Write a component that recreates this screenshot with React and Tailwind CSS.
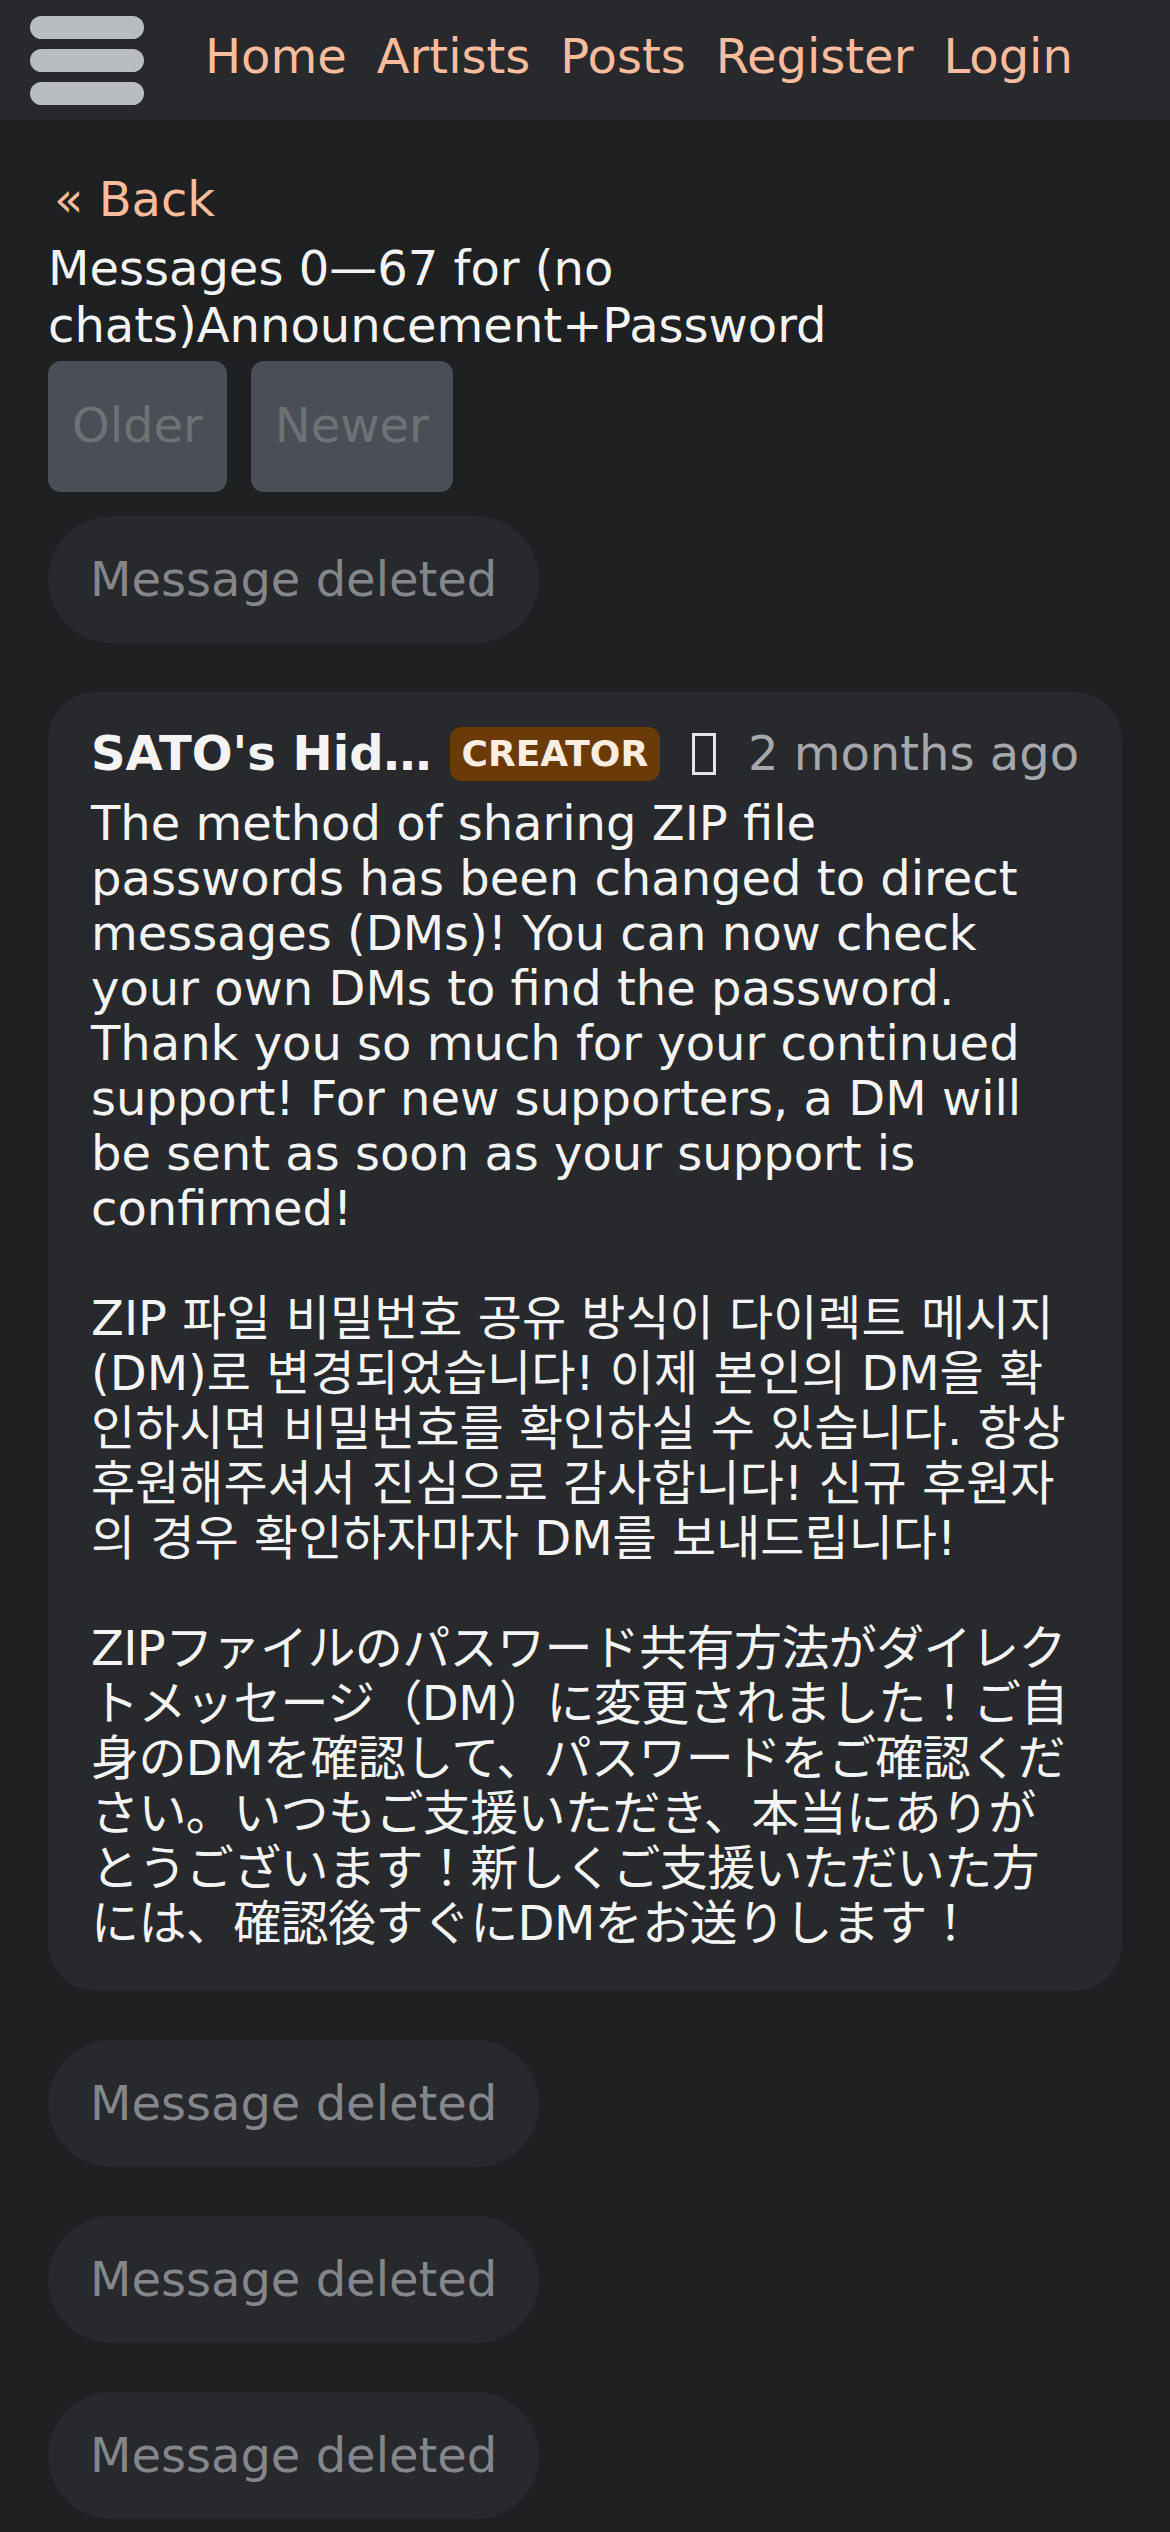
import React from 'react';

const navLinks = ['Home', 'Artists', 'Posts', 'Register', 'Login'];

const englishText = `The method of sharing ZIP file passwords has been changed to direct messages (DMs)! You can now check your own DMs to find the password. Thank you so much for your continued support! For new supporters, a DM will be sent as soon as your support is confirmed!`;

const koreanText = `ZIP 파일 비밀번호 공유 방식이 다이렉트 메시지(DM)로 변경되었습니다! 이제 본인의 DM을 확인하시면 비밀번호를 확인하실 수 있습니다. 항상 후원해주셔서 진심으로 감사합니다! 신규 후원자의 경우 확인하자마자 DM를 보내드립니다!`;

const japaneseText = `ZIPファイルのパスワード共有方法がダイレクトメッセージ（DM）に変更されました！ご自身のDMを確認して、パスワードをご確認ください。いつもご支援いただき、本当にありがとうございます！新しくご支援いただいた方には、確認後すぐにDMをお送りします！`;

const DeletedMessage = () => (
  <div className="w-fit rounded-full bg-[#28292c] px-[42px] py-[36px] text-[48px] leading-[55px] text-[#85868a]">
    Message deleted
  </div>
);

const App = () => {
  return (
    <div className="min-h-screen bg-[#1f2022] font-['DejaVu_Sans','Noto_Sans_CJK_JP',sans-serif]">
      <header className="flex h-[120px] items-center bg-[#28292d] pl-[30px]">
        <button className="flex w-[114px] flex-col gap-[10px]">
          <span className="h-[23px] rounded-full bg-[#b9bcc1]" />
          <span className="h-[23px] rounded-full bg-[#b9bcc1]" />
          <span className="h-[23px] rounded-full bg-[#b9bcc1]" />
        </button>
        <nav className="mb-[9px] ml-[61px] flex gap-[30px] text-[48px] leading-none text-[#f9bc9c]">
          {navLinks.map((link) => (
            <a key={link} href="#">{link}</a>
          ))}
        </nav>
      </header>

      <main className="px-[48px] pt-[51px] pb-[16px]">
        <a href="#" className="block pl-[6px] text-[48px] leading-[57px] text-[#f9bc9c]">« Back</a>
        <h1 className="mt-[12px] text-[48px] leading-[57px] font-normal text-[#f4f4f4]">
          Messages 0—67 for (no chats)Announcement+Password
        </h1>

        <div className="mt-[7px] flex gap-[24px]">
          <button className="h-[131px] rounded-[13px] bg-[#4a4f57] px-[24px] pb-[4px] text-[48px] text-[#6f7275]">Older</button>
          <button className="h-[131px] rounded-[13px] bg-[#4a4f57] px-[24px] pb-[4px] text-[48px] text-[#6f7275]">Newer</button>
        </div>

        <div className="mt-[24px] flex flex-col gap-[49px]">
          <DeletedMessage />

          <div className="rounded-[48px] bg-[#28292c] px-[43px] pt-[34px] pb-[40px]">
            <div className="flex items-center whitespace-nowrap">
              <span className="text-[48px] leading-[55px] font-bold text-[#f4f4f4]">SATO's Hid…</span>
              <span className="ml-[18px] flex h-[54px] items-center rounded-[12px] bg-[#6b3b07] px-[12px] text-[36px] font-bold text-[#fbeee0]">
                CREATOR
              </span>
              <span className="ml-[32px] h-[42px] w-[24px] border-[3px] border-[#e6e6e6]" />
              <span className="ml-[32px] text-[48px] leading-[55px] text-[#a6a7aa]">2 months ago</span>
            </div>
            <p className="mt-[15px] whitespace-pre-line text-[48px] leading-[55px] text-[#f4f4f4]">
              {englishText}
              {'\n\n'}
              {koreanText}
              {'\n\n'}
              <span className="tracking-[-0.6px]">{japaneseText}</span>
            </p>
          </div>

          <DeletedMessage />
          <DeletedMessage />
          <DeletedMessage />
        </div>
      </main>
    </div>
  );
};

export default App;
